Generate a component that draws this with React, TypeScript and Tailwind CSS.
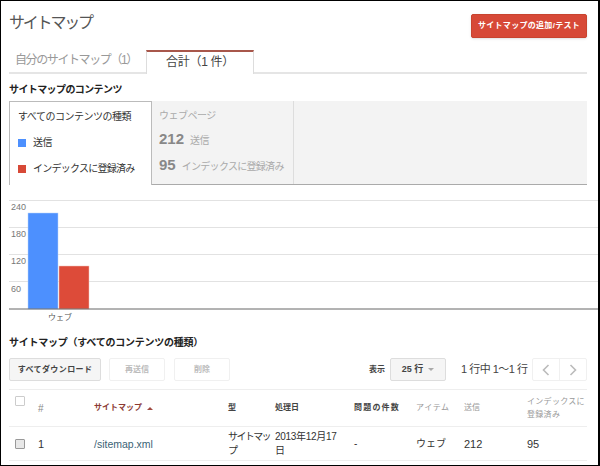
const font = { fontFamily: '"Liberation Sans", "Noto Sans CJK JP", sans-serif' };

function Chart() {
  const grid = [200.5, 227.5, 254.5, 281.5];
  const labels = [["240", 207], ["180", 234], ["120", 261], ["60", 289]] as const;
  return (
    <svg width="591" height="128" viewBox="0 195 591 128" className="block">
      {grid.map((y) => (
        <line key={y} x1="0" x2="591" y1={y} y2={y} stroke="#e2e2e2" strokeWidth="1" />
      ))}
      <rect x="19" y="213" width="30" height="96" fill="#4d90fe" stroke="#b8d3fb" strokeWidth="0.5" />
      <rect x="50" y="266" width="30" height="43" fill="#dd4b39" stroke="#f2c4bd" strokeWidth="0.5" />
      <line x1="0" x2="591" y1="309" y2="309" stroke="#666" strokeWidth="1" />
      {labels.map(([t, y]) => (
        <text key={t} x="2" y={y + 3} fontSize="9" fill="#777" fontFamily="Liberation Sans">{t}</text>
      ))}
      <text x="39" y="320" fontSize="8" fill="#555" fontFamily="Noto Sans CJK JP">ウェブ</text>
    </svg>
  );
}

export default function App() {
  return (
    <div style={font} className="w-[600px] h-[466px] overflow-hidden bg-white border-t-[1px] border-l-[1px] border-r-[2px] border-b-[1px] border-black text-[#333] flex flex-col">
      <div className="flex justify-between pl-[8px] pr-[11px] h-[49px] shrink-0">
        <div className="text-[16px] leading-[20px] mt-[12px] text-[#555] tracking-[-2.2px]">サイトマップ</div>
        <button style={font} className="mt-[13px] w-[116px] h-[24px] rounded-[2px] bg-[#d74937] border border-[#c8442f] text-white text-[8px] font-bold tracking-[0.3px] shadow-sm whitespace-nowrap">サイトマップの追加/テスト</button>
      </div>

      <div className="flex items-end h-[24px] shrink-0 ml-[8px] mr-[11px] border-b-2 border-[#e5e5e5]">
        <div className="w-[137px] h-[22px] pl-[6px] text-[12px] leading-[20px] text-[#999] tracking-[-1.4px] whitespace-nowrap">自分のサイトマップ（1）</div>
        <div className="w-[108px] h-[24px] -mb-[2px] bg-white border-t-2 border-t-[#a8574b] border-x border-x-[#ddd] text-[12px] leading-[20px] text-center text-[#444] tracking-[-0.3px] whitespace-nowrap">合計（1 件）</div>
      </div>

      <div className="ml-[8px] mt-[9px] h-[18px] text-[10px] leading-[14px] font-bold text-[#222] tracking-[-0.6px] shrink-0">サイトマップのコンテンツ</div>

      <div className="flex h-[84px] shrink-0 ml-[8px] mr-[11px] bg-[#f3f3f3] border-b border-[#aaa]">
        <div className="w-[143px] -mb-px bg-white border-l border-t border-r border-[#bbb] pl-[8px] pt-[8px] text-[10px] leading-[14px] text-[#333] tracking-[-0.5px] whitespace-nowrap">
          <div>すべてのコンテンツの種類</div>
          <div className="flex items-center gap-[7px] mt-[12px]">
            <span className="w-[8px] h-[8px] bg-[#4d90fe]" />送信
          </div>
          <div className="flex items-center gap-[7px] mt-[12px]">
            <span className="w-[8px] h-[8px] bg-[#d74937]" /><span className="tracking-[-0.75px]">インデックスに登録済み</span>
          </div>
        </div>
        <div className="w-[142px] border-r border-[#ddd] pl-[7px] pt-[8px] text-[10px] leading-[14px] text-[#aaa] tracking-[-0.5px] whitespace-nowrap">
          <div>ウェブページ</div>
          <div className="flex items-baseline gap-[6px] mt-[7px]">
            <span className="text-[15px] leading-[18px] font-bold text-[#888] tracking-normal">212</span>送信
          </div>
          <div className="flex items-baseline gap-[6px] mt-[8px]">
            <span className="text-[15px] leading-[18px] font-bold text-[#888] tracking-normal">95</span><span className="tracking-[-0.7px]">インデックスに登録済み</span>
          </div>
        </div>
      </div>

      <div className="ml-[8px] mt-[10px] shrink-0"><Chart /></div>

      <div className="ml-[8px] mt-[13px] h-[22px] text-[10px] leading-[14px] font-bold text-[#222] tracking-[-0.25px] shrink-0">サイトマップ（すべてのコンテンツの種類）</div>

      <div className="flex items-center h-[23px] shrink-0 ml-[8px] mr-[11px] text-[8px]">
        <button style={font} className="w-[92px] h-[23px] rounded-[2px] bg-[#f5f5f5] border border-[#ddd] font-bold text-[#444] text-[8px] tracking-[0.4px]">すべてダウンロード</button>
        <button style={font} className="ml-[8px] w-[56px] h-[23px] rounded-[2px] border border-[#f0f0f0] text-[#bbb] font-bold">再送信</button>
        <button style={font} className="ml-[9px] w-[56px] h-[23px] rounded-[2px] border border-[#f0f0f0] text-[#bbb] font-bold">削除</button>
        <span className="ml-auto font-bold text-[#444]">表示</span>
        <div className="ml-[5px] w-[56px] h-[23px] rounded-[2px] bg-[#f5f5f5] border border-[#ddd] flex items-center justify-center gap-[5px] font-bold text-[#444] text-[9px]">
          25 行 <span className="w-0 h-0 border-x-[3px] border-x-transparent border-t-[3px] border-t-[#aaa]" />
        </div>
        <span className="ml-[15px] w-[66px] text-[11px] text-[#444] tracking-[-0.5px] whitespace-nowrap">1 行中 1〜1 行</span>
        <div className="ml-[5px] flex w-[55px] h-[23px] border border-[#f0f0f0] rounded-[2px] divide-x divide-[#f0f0f0] text-[#bbb]">
          <div className="flex-1 flex items-center justify-center">
            <svg width="8" height="12" viewBox="0 0 8 12" fill="none" stroke="#bbb" strokeWidth="1.6"><path d="M6.5 1 1.5 6l5 5" /></svg>
          </div>
          <div className="flex-1 flex items-center justify-center">
            <svg width="8" height="12" viewBox="0 0 8 12" fill="none" stroke="#bbb" strokeWidth="1.6"><path d="M1.5 1 6.5 6l-5 5" /></svg>
          </div>
        </div>
      </div>

      <div className="mt-[8px] ml-[8px] mr-[11px] border-t border-[#eee] grid grid-cols-[29px_56px_134px_47px_79px_62px_48px_63px_60px] h-[38px] shrink-0 items-center border-b text-[8px] font-bold text-[#444] whitespace-nowrap">
        <div className="pl-[6px] -mt-[14px]"><span className="block w-[10px] h-[10px] border border-[#ccc] rounded-[1px] bg-white" /></div>
        <div className="font-normal text-[#888] text-[10px]">#</div>
        <div className="text-[#8c3a34] flex items-center gap-[5px]">
          サイトマップ <span className="w-0 h-0 border-x-[3px] border-x-transparent border-b-[3px] border-b-[#a04a42]" />
        </div>
        <div>型</div>
        <div>処理日</div>
        <div className="tracking-[1.2px]">問題の件数</div>
        <div className="font-normal text-[#999] tracking-[0.6px]">アイテム</div>
        <div className="font-normal text-[#999]">送信</div>
        <div className="font-normal text-[#999] leading-[13px] tracking-[0.3px]">インデックスに<br />登録済み</div>
      </div>

      <div className="ml-[8px] mr-[11px] grid grid-cols-[29px_56px_134px_47px_79px_62px_48px_63px_60px] h-[34px] shrink-0 items-center border-b border-[#eee] text-[10px] leading-[14px] text-[#333]">
        <div className="pl-[6px]"><span className="block w-[10px] h-[10px] border border-[#999] rounded-[1px] bg-[#e8e8e8]" /></div>
        <div className="text-[11px]">1</div>
        <div className="text-[#3b6375] text-[10.5px]">/sitemap.xml</div>
        <div className="tracking-[-1.6px] pr-[3px]">サイトマップ</div>
        <div className="tracking-[-0.3px] pr-[12px]">2013年12月17日</div>
        <div>-</div>
        <div>ウェブ</div>
        <div className="text-[11px]">212</div>
        <div className="text-[11px]">95</div>
      </div>
    </div>
  );
}
